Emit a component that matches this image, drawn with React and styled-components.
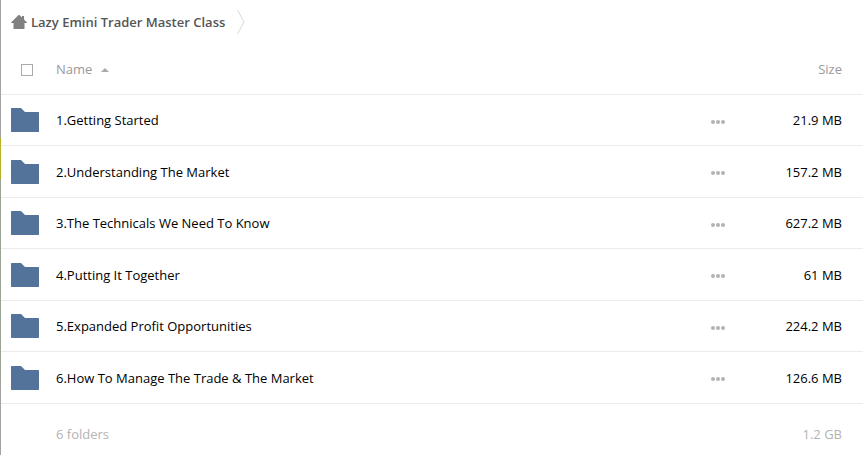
import React, { useState } from "react"
import styled, { createGlobalStyle } from "styled-components"

const folders = [
  { name: "1.Getting Started", size: "21.9 MB" },
  { name: "2.Understanding The Market", size: "157.2 MB" },
  { name: "3.The Technicals We Need To Know", size: "627.2 MB" },
  { name: "4.Putting It Together", size: "61 MB" },
  { name: "5.Expanded Profit Opportunities", size: "224.2 MB" },
  { name: "6.How To Manage The Trade & The Market", size: "126.6 MB" },
]

const GlobalStyle = createGlobalStyle`
  * {
    box-sizing: border-box;
  }

  body {
    margin: 0;
    background: #fff;
    color: #000;
    font-family: "Open Sans", "Noto Sans", sans-serif;
    font-size: 13px;
    line-height: 20px;
  }

  button {
    padding: 0;
    border: 0;
    background: none;
    font: inherit;
    color: inherit;
    cursor: pointer;
  }

  svg {
    display: block;
  }
`

/* the strip along the left edge changes colour on its way down */
const Page = styled.main`
  min-height: 100vh;
  padding-left: 1px;
  background: linear-gradient(
      #a3a3a3 138px,
      #b9b32b 138px,
      #b9b32b 179px,
      #9aa597 179px,
      #9aa597 380px,
      #a3a3a3 380px
    )
    left / 1px 100% no-repeat;
`

const Breadcrumbs = styled.nav`
  display: flex;
  align-items: center;
  gap: 12px;
  height: 44px;
  padding-left: 10px;
`

const Crumb = styled.a`
  display: flex;
  align-items: center;
  gap: 4px;
  color: #555;
  font-weight: 600;
  text-decoration: none;
`

const FileTable = styled.table`
  width: 100%;
  table-layout: fixed;
  border-spacing: 0;
`

const Column = styled.col`
  width: ${props => props.$width};
`

const Cell = styled.td`
  padding: 0;
  border-bottom: 1px solid #ebebeb;
  font-weight: 400;
  text-align: ${props => props.$align || "left"};
  vertical-align: middle;

  &:first-child {
    padding-left: 10px;
  }

  &:last-child {
    padding-right: 21px;
  }
`

const HeadRow = styled.tr`
  height: 51px;
  color: #999;
`

const FolderRow = styled.tr`
  height: 51px;

  &:nth-child(even) {
    height: 52px;
  }
`

const TotalRow = styled.tr`
  height: 51px;
  color: #b3b3b3;

  td {
    padding-top: 8px;
    border-bottom: 0;
  }
`

const Checkbox = styled.input`
  appearance: none;
  display: block;
  width: 12px;
  height: 12px;
  margin: 2px 0 0 10px;
  border: 1px solid #aaa;
  background: #fff;

  &:checked {
    background: #54739b;
  }
`

const SortButton = styled.button`
  display: flex;
  align-items: center;
  gap: 9px;

  svg {
    margin-top: 2px;
  }
`

const FolderLink = styled.a`
  color: inherit;
  text-decoration: none;
`

const MoreButton = styled.button`
  display: block;
  margin: 0 auto;
  padding: 7px 4px 4px;
`

const HomeIcon = () => (
  <svg width="16" height="14" viewBox="0 0 16 14" fill="#808080" aria-hidden="true">
    <path d="M7.5 0 H8.5 L11 2.5 V1 H13 V4.5 L16 7.5 V8 H13.5 V14 H2.5 V8 H0 V7.5 Z" />
  </svg>
)

const ChevronIcon = () => (
  <svg width="8" height="24" viewBox="0 0 8 24" fill="none" stroke="#d9d9d9" aria-hidden="true">
    <path d="M0.5 0 L7 12 L0.5 24" />
  </svg>
)

const SortIcon = () => (
  <svg width="8" height="4" viewBox="0 0 8 4" fill="#aaa" aria-hidden="true">
    <path d="M0 4 L4 0 L8 4 Z" />
  </svg>
)

const FolderIcon = () => (
  <svg width="28" height="24" viewBox="0 0 28 24" fill="#54739b" aria-hidden="true">
    <path d="M0.5 0 H10 L14 4 H27.5 L28 4.5 V23.5 L27.5 24 H0.5 L0 23.5 V0.5 Z" />
  </svg>
)

const MoreIcon = () => (
  <svg width="14" height="4" viewBox="0 0 14 4" fill="#b3b3b3" aria-hidden="true">
    <circle cx="2" cy="2" r="2" />
    <circle cx="7" cy="2" r="2" />
    <circle cx="12" cy="2" r="2" />
  </svg>
)

const Folder = ({ name, size }) => (
  <FolderRow>
    <Cell>
      <FolderIcon />
    </Cell>
    <Cell>
      <FolderLink href="#">{name}</FolderLink>
    </Cell>
    <Cell>
      <MoreButton type="button" aria-label={`Actions for ${name}`}>
        <MoreIcon />
      </MoreButton>
    </Cell>
    <Cell $align="right">{size}</Cell>
  </FolderRow>
)

const App = () => {
  const [ascending, setAscending] = useState(true)
  const rows = ascending ? folders : [...folders].reverse()

  return (
    <Page>
      <GlobalStyle />
      <Breadcrumbs aria-label="Breadcrumb">
        <Crumb href="#">
          <HomeIcon />
          Lazy Emini Trader Master Class
        </Crumb>
        <ChevronIcon />
      </Breadcrumbs>
      <FileTable>
        <colgroup>
          <Column $width="55px" />
          <Column $width="auto" />
          <Column $width="50px" />
          <Column $width="120px" />
        </colgroup>
        <thead>
          <HeadRow>
            <Cell as="th">
              <Checkbox type="checkbox" aria-label="Select all" />
            </Cell>
            <Cell as="th" scope="col">
              <SortButton type="button" onClick={() => setAscending(!ascending)}>
                Name
                <SortIcon />
              </SortButton>
            </Cell>
            <Cell as="th" />
            <Cell as="th" scope="col" $align="right">
              Size
            </Cell>
          </HeadRow>
        </thead>
        <tbody>
          {rows.map(folder => (
            <Folder key={folder.name} {...folder} />
          ))}
        </tbody>
        <tfoot>
          <TotalRow>
            <Cell />
            <Cell>6 folders</Cell>
            <Cell />
            <Cell $align="right">1.2 GB</Cell>
          </TotalRow>
        </tfoot>
      </FileTable>
    </Page>
  )
}

export default App
